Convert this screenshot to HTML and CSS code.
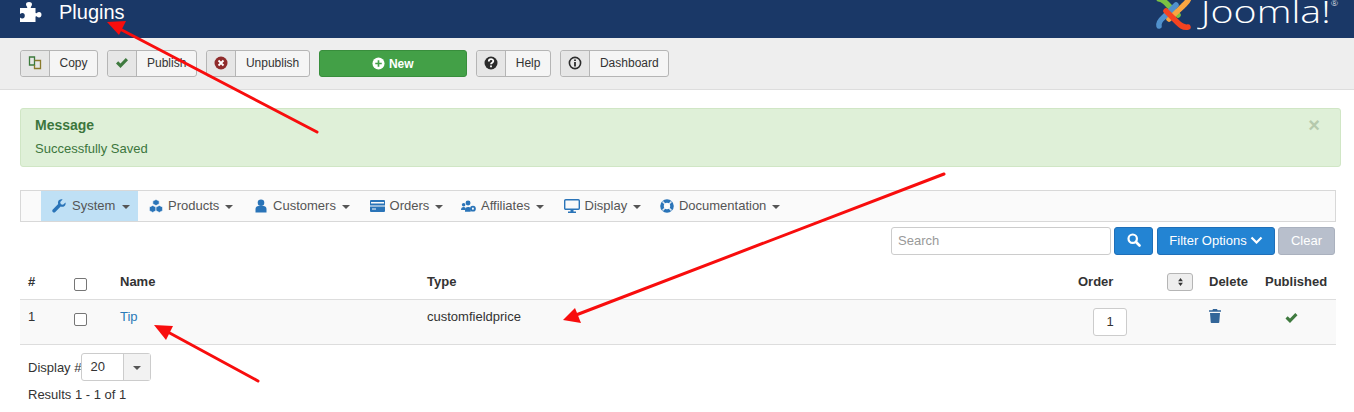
FILE: index.html
```html
<!DOCTYPE html>
<html lang="en">
<head>
<meta charset="utf-8">
<title>Plugins</title>
<link rel="stylesheet" href="styles.css">
</head>
<body>
<header class="topbar">
  <div class="brand">
    <svg class="puzzle" viewBox="0 0 24 22" width="24" height="22"><path fill="#fff" d="M1 7h6.500c.8 0 1-.6.5-1.300C7.300 4.800 7 4.200 7 3.300 7 1.800 8.300 1 10 1s3 .8 3 2.300c0 .9-.4 1.500-1 2.400-.5.700-.3 1.300.5 1.300H16.500v4.500c0 .8.600 1 1.300.5.800-.6 1.400-1 2.300-1 1.500 0 2.400 1.100 2.400 2.700s-.9 2.700-2.400 2.700c-.9 0-1.500-.4-2.300-1-.7-.5-1.300-.3-1.300.5V21H1V16.500c1 .7 1.600 1 2.400 1 1.500 0 2.400-1.200 2.400-2.800S4.900 12 3.400 12c-.8 0-1.400.3-2.400 1Z"/></svg>
    <h1 class="title">Plugins</h1>
  </div>
  <div class="logo">
    <svg class="logo-mark" viewBox="0 0 37 38" width="37" height="38" fill="none" stroke-width="5.500" stroke-linecap="round">
      <path stroke="#7ac143" d="M4 5c4 0 6 3 9 6l10 10"/>
      <path stroke="#f9a541" d="M34 3c0 4-3 6-6 9L14 25"/>
      <path stroke="#5091cd" d="M4 32c-1-5 3-7 6-10l11-11"/>
      <path stroke="#f44321" d="M33 33c-5 1-8-2-11-5L11 17"/>
    </svg>
    <span class="logo-text">Joomla!<sup class="reg">®</sup></span>
  </div>
</header>

<div class="toolbar">
  <a class="tbtn"><span class="tbtn-ic"><svg viewBox="0 0 14 14" width="14" height="14" fill="none" stroke-width="1.300"><path stroke="#3c7a3c" d="M1.500 1h5v8h-5z"/><path stroke="#8a7a2c" d="M6.500 4.500h6v8h-6V9"/></svg></span><span class="tbtn-tx">Copy</span></a>
  <a class="tbtn wide-a"><span class="tbtn-ic"><svg viewBox="0 0 14 12" width="14" height="12"><path fill="#3f7a3f" d="m1 6.500 2.200-2.200 2.300 2.300L10.800 1 13 3.200 5.500 11z"/></svg></span><span class="tbtn-tx">Publish</span></a>
  <a class="tbtn"><span class="tbtn-ic"><svg viewBox="0 0 14 14" width="14" height="14"><circle cx="7" cy="7" r="6.500" fill="#8f2b2b"/><path stroke="#fff" stroke-width="1.800" d="m4.500 4.500 5 5m0-5-5 5"/></svg></span><span class="tbtn-tx">Unpublish</span></a>
  <a class="newbtn"><svg viewBox="0 0 14 14" width="13" height="13"><circle cx="7" cy="7" r="6.500" fill="#fff"/><path stroke="#43a047" stroke-width="1.800" d="M7 3.500v7M3.500 7h7"/></svg>New</a>
  <a class="tbtn wide-a"><span class="tbtn-ic"><svg viewBox="0 0 14 14" width="14" height="14"><circle cx="7" cy="7" r="6.500" fill="#2b2b2b"/><path fill="none" stroke="#fff" stroke-width="1.800" d="M4.800 5.400c0-3 4.500-3 4.500-.3 0 1.700-2.300 1.500-2.300 3.200"/><path stroke="#fff" stroke-width="1.800" d="M7 9.500v1.800"/></svg></span><span class="tbtn-tx">Help</span></a>
  <a class="tbtn"><span class="tbtn-ic"><svg viewBox="0 0 14 14" width="14" height="14"><circle cx="7" cy="7" r="5.600" fill="none" stroke="#2b2b2b" stroke-width="1.600"/><path stroke="#2b2b2b" stroke-width="1.800" d="M7 6v4.500M7 3.500v1.500"/></svg></span><span class="tbtn-tx">Dashboard</span></a>
</div>

<main class="content">
  <section class="message">
    <button class="msg-close" type="button">×</button>
    <h4 class="msg-title">Message</h4>
    <p class="msg-text">Successfully Saved</p>
  </section>

  <nav class="menu">
    <a class="menu-item active"><svg viewBox="0 0 14 14" width="14" height="14"><path fill="#2a74b8" d="M13.500 3.400 11 5.800 8.800 5.200 8.200 3 10.600.5C8.700 0 6.300.800 6 3.200c-.1.700 0 1.300.2 1.900L.8 10.500c-.7.700-.7 1.800 0 2.500s1.800.7 2.500 0l5.400-5.400c2.700 1 5.600-1.200 4.800-4.200Z"/></svg>System<i class="caret"></i></a>
    <a class="menu-item roomy"><svg viewBox="0 0 14 14" width="14" height="14"><g fill="#2a74b8" stroke="#fff" stroke-width=".6"><path d="M7 .5 10.200 2v3L7 6.600 3.800 5V2z"/><path d="M3.700 6.500 7 8v3.700l-3.300 1.700L.4 11.700V8z"/><path d="M10.300 6.500 13.600 8v3.700l-3.300 1.700L7 11.700V8z"/></g></svg>Products<i class="caret"></i></a>
    <a class="menu-item"><svg viewBox="0 0 14 14" width="14" height="14"><circle cx="7" cy="3.700" r="3.300" fill="#2a74b8"/><path fill="#2a74b8" d="M1.500 13.500V10c0-2 1.500-3 3-3h5c1.500 0 3 1 3 3v3.500z"/></svg>Customers<i class="caret"></i></a>
    <a class="menu-item tight"><svg viewBox="0 0 15 12" width="15" height="12"><path fill="#2a74b8" fill-rule="evenodd" d="M1 0h13a1 1 0 0 1 1 1v10a1 1 0 0 1-1 1H1a1 1 0 0 1-1-1V1a1 1 0 0 1 1-1Zm0 2v1.500h13V2ZM0 5.500v1h15v-1ZM2 8.500v1h4v-1Z"/></svg>Orders<i class="caret"></i></a>
    <a class="menu-item"><svg viewBox="0 0 17 13" width="15" height="12"><g fill="#2a74b8"><circle cx="8" cy="3" r="2.800"/><circle cx="3" cy="5" r="2"/><path d="M0 11c0-2.500 1-3.500 3-3.500s2.500 1 2.500 3.500z"/><path d="M4.500 13c0-4 1-5.500 3.500-5.500S11 8 11 13z"/><circle cx="13.500" cy="9.500" r="3.300"/></g><circle cx="13.500" cy="9.500" r="1.200" fill="#fafafa"/></svg>Affiliates<i class="caret"></i></a>
    <a class="menu-item snug"><svg viewBox="0 0 16 14" width="16" height="14"><rect x=".7" y=".7" width="14.600" height="9.600" rx="1" fill="none" stroke="#2a74b8" stroke-width="1.400"/><path fill="#2a74b8" d="M6.500 10.500h3v2h-3zM4 12.500h8V14H4z"/></svg>Display<i class="caret"></i></a>
    <a class="menu-item"><svg viewBox="0 0 14 14" width="14" height="14"><circle cx="7" cy="7" r="5" fill="none" stroke="#2a74b8" stroke-width="3.600"/><path stroke="#dfe9f3" stroke-width="1.500" d="m2.500 2.500 2.500 2.500m6.500-2.500L9 5m2.500 6.500L9 9m-6.500 2.500L5 9"/></svg>Documentation<i class="caret"></i></a>
  </nav>

  <form class="filters">
    <input class="search" type="text" placeholder="Search">
    <button class="fbtn icon-only" type="button"><svg viewBox="0 0 14 14" width="14" height="14"><circle cx="5.700" cy="5.700" r="4.200" fill="none" stroke="#fff" stroke-width="2.200"/><path stroke="#fff" stroke-width="2.600" stroke-linecap="round" d="m9 9 3.500 3.500"/></svg></button>
    <button class="fbtn filter" type="button">Filter Options<svg class="chev" viewBox="0 0 12 8" width="13" height="8"><path fill="none" stroke="#fff" stroke-width="2.200" d="m1 1.500 5 5 5-5"/></svg></button>
    <button class="fbtn clear" type="button">Clear</button>
  </form>

  <table class="grid">
    <colgroup>
      <col class="c-num"><col class="c-check"><col class="c-name"><col class="c-type"><col class="c-order"><col class="c-sort"><col class="c-del"><col class="c-pub">
    </colgroup>
    <thead>
      <tr>
        <th>#</th>
        <th><span class="check"></span></th>
        <th>Name</th>
        <th>Type</th>
        <th>Order</th>
        <th><span class="sortbtn"><svg viewBox="0 0 6 10" width="5" height="8"><path fill="#333" d="M3 0 6 4H0zM3 10 0 6h6z"/></svg></span></th>
        <th>Delete</th>
        <th>Published</th>
      </tr>
    </thead>
    <tbody>
      <tr>
        <td>1</td>
        <td><span class="check"></span></td>
        <td><a class="link">Tip</a></td>
        <td>customfieldprice</td>
        <td><span class="orderbox">1</span></td>
        <td></td>
        <td class="center-del"><svg viewBox="0 0 12 14" width="12" height="14"><path fill="#336699" d="M4 0h4l.6 1.200H12v1.600H0V1.200h3.400zM1 4h10l-.7 9c0 .6-.5 1-1 1H2.700c-.5 0-1-.4-1-1z"/></svg></td>
        <td class="center-pub"><svg viewBox="0 0 14 12" width="15" height="12"><path fill="#3f7a3f" d="m1 6.500 2.200-2.200 2.300 2.300L10.800 1 13 3.200 5.500 11z"/></svg></td>
      </tr>
    </tbody>
  </table>

  <div class="pager">
    <span class="pager-label">Display #</span>
    <span class="select"><span class="select-val">20</span><span class="select-btn"><i class="caret"></i></span></span>
  </div>
  <p class="results">Results 1 - 1 of 1</p>
</main>

<svg class="arrows" width="1354" height="412" viewBox="0 0 1354 412">
  <g stroke="#f80d0d" stroke-width="3" fill="#f80d0d" stroke-linecap="round">
    <path d="M317 132 118 28"/>
    <path stroke="none" d="m107 22 19-1-7 14z"/>
    <path d="M944 174 576 315"/>
    <path stroke="none" d="m563 320 12-12 6 15z"/>
    <path d="M258 381 166 331"/>
    <path stroke="none" d="m154 325 19 1-7 14z"/>
  </g>
</svg>
</body>
</html>
```

FILE: styles.css
```css
* { box-sizing: border-box; }
html, body { margin: 0; height: 412px; overflow: hidden; }
body {
  position: relative;
  background: #fff;
  color: #333;
  font-family: "Liberation Sans", Arial, sans-serif;
  font-size: 13px;
  line-height: 18px;
}

.topbar {
  height: 38px;
  background: #1a3867;
  display: flex;
  justify-content: space-between;
  padding: 0 16px 0 19px;
}
.brand { display: flex; align-items: flex-start; gap: 16px; }
.puzzle { margin-top: 1px; }
.title { margin: 0; color: #fff; font-size: 20px; font-weight: 400; line-height: 24px; }
.logo { display: flex; align-items: flex-start; gap: 38px; }
.logo-text {
  color: #fff;
  font-family: "Open Sans", sans-serif;
  font-weight: 300;
  font-size: 31px;
  line-height: 30px;
  margin-top: -4px;
  transform: scaleX(1.27);
  transform-origin: right top;
}
.logo-mark { margin-top: -6px; }
.reg { font-size: 7px; line-height: 0; vertical-align: 17px; }

.toolbar {
  height: 52px;
  background: #eee;
  border-bottom: 1px solid #ddd;
  display: flex;
  gap: 9px;
  padding: 12px 20px 0;
}
.tbtn {
  display: flex;
  height: 27px;
  border: 1px solid #b5b5b5;
  border-radius: 3px;
  background: #f5f5f5;
  font-size: 12px;
  line-height: 25px;
  color: #333;
}
.tbtn-ic {
  width: 29px;
  flex: none;
  padding-bottom: 1px;
  background: #e6e6e6;
  border-right: 1px solid #b5b5b5;
  border-radius: 3px 0 0 3px;
  display: flex;
  align-items: center;
  justify-content: center;
}
.tbtn-tx { padding: 0 9.500px; }
.wide-a .tbtn-tx { padding: 0 10px; }
.newbtn {
  width: 148px;
  height: 27px;
  background: #43a047;
  border: 1px solid #388e3c;
  border-radius: 3px;
  color: #fff;
  font-size: 12px;
  font-weight: 700;
  display: flex;
  align-items: center;
  justify-content: center;
  gap: 4px;
}

.content { padding: 18px 13px 0 20px; }

.message {
  position: relative;
  height: 59px;
  background: #dff0d8;
  border: 1px solid #d0e6c5;
  border-radius: 3px;
  color: #3c763d;
  padding: 6px 14px;
}
.msg-title { margin: 0; font-size: 14px; line-height: 20px; font-weight: 700; }
.msg-text { margin: 4px 0 0; font-size: 13px; line-height: 20px; }
.msg-close {
  position: absolute;
  top: 6px;
  right: 20px;
  padding: 0;
  border: 0;
  background: none;
  color: #b5c9ad;
  font: 700 20px/20px "Liberation Sans", Arial, sans-serif;
}

.menu {
  margin-top: 23px;
  height: 32px;
  background: #fafafa;
  border: 1px solid #d8d8d8;
  display: flex;
  padding-left: 20px;
  width: 1316px;
}
.menu-item {
  display: flex;
  align-items: center;
  gap: 5px;
  padding: 0 9px 0 11px;
  font-size: 13px;
  color: #555;
}
.menu-item.active { background: #bfe0f5; gap: 6px; padding: 0 8px 0 11px; }
.menu-item.roomy { padding-right: 10px; }
.menu-item.tight { padding-right: 7px; }
.menu-item.snug { padding-right: 8px; }
.caret {
  display: inline-block;
  width: 0;
  height: 0;
  border-left: 4px solid transparent;
  border-right: 4px solid transparent;
  border-top: 4px solid #555;
  margin-top: 2px;
}
.menu-item .caret { margin-left: .7px; }

.filters {
  margin-top: 5px;
  height: 28px;
  width: 1315px;
  display: flex;
  justify-content: flex-end;
  gap: 3px;
}
.search {
  width: 220px;
  height: 28px;
  border: 1px solid #ccc;
  border-radius: 3px;
  padding: 0 6px 2px;
  font: 13px "Liberation Sans", Arial, sans-serif;
  color: #333;
}
.search::placeholder { color: #999; opacity: 1; }
.fbtn {
  height: 28px;
  border: 1px solid #1f6fb8;
  border-radius: 3px;
  background: #2384d3;
  color: #fff;
  padding: 0 0 2px;
  font: 13px "Liberation Sans", Arial, sans-serif;
  display: flex;
  align-items: center;
  justify-content: center;
}
.icon-only { width: 39px; }
.filter { width: 118px; margin-left: 1px; gap: 3px; }
.clear { background: #b8bfcc; border-color: #aab1be; width: 57px; }

.grid {
  margin-top: 9px;
  width: 1316px;
  table-layout: fixed;
  border-collapse: collapse;
}
.c-num { width: 46px; }
.c-check { width: 46px; }
.c-name { width: 307px; }
.c-type { width: 651px; }
.c-order { width: 89px; }
.c-sort { width: 42px; }
.c-del { width: 56px; }
.c-pub { width: 79px; }
.grid th, .grid td { padding: 8px 0 0 8px; text-align: left; vertical-align: top; }
.grid th { height: 35px; padding-top: 9px; font-weight: 700; border-bottom: 1px solid #ddd; }
.grid td { height: 45px; background: #f9f9f9; border-bottom: 1px solid #ddd; }
.check {
  display: block;
  width: 13px;
  height: 13px;
  margin-top: 5px;
  border: 1px solid #767676;
  border-radius: 2px;
  background: #fff;
}
.link { color: #2a7ab8; }
.sortbtn {
  display: flex;
  align-items: center;
  justify-content: center;
  width: 26px;
  height: 18px;
  border: 1px solid #b5b5b5;
  border-radius: 3px;
  background: #eee;
}
.orderbox {
  display: block;
  width: 34px;
  height: 28px;
  margin: 0 0 0 15px;
  border: 1px solid #ccc;
  border-radius: 3px;
  background: #fff;
  text-align: center;
  line-height: 26px;
}
.center-del svg { display: block; margin: 1px 0 0; }
.center-pub svg { display: block; margin: 4px 0 0 19px; }

.pager { margin-top: 8px; display: flex; align-items: center; height: 28px; padding-left: 8px; }
.select {
  display: flex;
  width: 70px;
  height: 28px;
  border: 1px solid #ccc;
  border-radius: 3px;
  background: #fff;
  line-height: 26px;
}
.pager-label { margin-top: 2px; }
.select-val { width: 41px; padding-left: 8px; }
.select-btn {
  flex: 1;
  background: #f2f2f2;
  border-left: 1px solid #ccc;
  display: flex;
  align-items: center;
  justify-content: center;
}
.results { margin: 5px 0 0 8px; }

.arrows { position: absolute; left: 0; top: 0; pointer-events: none; }
```
